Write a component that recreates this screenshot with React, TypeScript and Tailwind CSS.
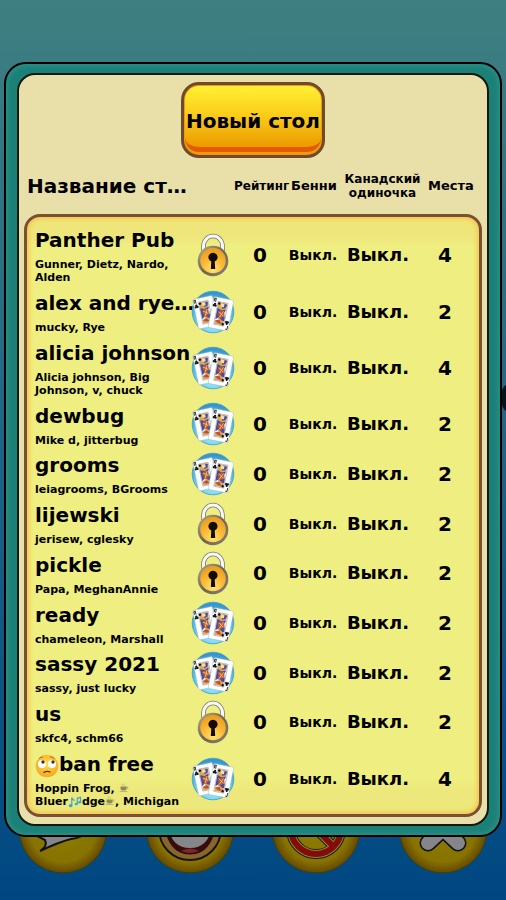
import type { ReactNode } from "react";

type Table = {
  name: ReactNode;
  players: ReactNode;
  locked?: boolean;
  seats: number;
};

function RollingEyes() {
  return (
    <svg viewBox="0 0 24 24" className="inline-block size-6 align-bottom" aria-label="🙄" role="img">
      <defs>
        <radialGradient id="face" cx="50%" cy="40%" r="60%">
          <stop offset="0" stopColor="#ffe04a" />
          <stop offset="1" stopColor="#f5a623" />
        </radialGradient>
      </defs>
      <circle cx="12" cy="12" r="11.300" fill="url(#face)" />
      <circle cx="7" cy="10" r="4" fill="#fff" />
      <circle cx="17" cy="10" r="4" fill="#fff" />
      <circle cx="8" cy="8" r="1.700" fill="#4a3320" />
      <circle cx="18" cy="8" r="1.700" fill="#4a3320" />
      <path d="M4 4.600q2-2 4-1.600M15 3q3-.2 4.500 1.600" stroke="#b06a1c" strokeWidth="1" fill="none" />
      <path d="M9 18.300q3-1.600 6-.5" stroke="#5b3a12" strokeWidth="1.400" fill="none" strokeLinecap="round" />
    </svg>
  );
}

function Coffee() {
  return (
    <svg viewBox="0 0 10 10" className="inline-block size-2.5 align-baseline" aria-label="☕" role="img">
      <path d="M1.500 4.500h6v2q0 2-3 2t-3-2z" fill="#8f8a5c" />
      <path d="M7.500 5h1.500q0 2-1.800 2M.8 9.500h7.600M3.500 3.500q-.8-.8 0-1.800M5.500 3.500q-.8-.8 0-1.800" stroke="#a8a268" strokeWidth=".7" fill="none" />
    </svg>
  );
}

function Notes() {
  return (
    <svg viewBox="0 0 14 13" className="inline-block h-3 w-3.5 align-bottom" aria-label="🎶" role="img">
      <path d="M3.500 10V1.500q.3 2 3 3.500M9.500 8.500v-6l3.500-1v5" stroke="#39a9c9" strokeWidth="1.300" fill="none" />
      <ellipse cx="2.300" cy="10.500" rx="2" ry="1.700" fill="#39a9c9" />
      <ellipse cx="8.400" cy="8.600" rx="1.700" ry="1.400" fill="#39a9c9" />
      <ellipse cx="12" cy="6.700" rx="1.600" ry="1.300" fill="#39a9c9" />
    </svg>
  );
}

const tables: Table[] = [
  { name: "Panther Pub", players: "Gunner, Dietz, Nardo, Alden", locked: true, seats: 4 },
  { name: "alex and rye…", players: "mucky, Rye", seats: 2 },
  { name: "alicia johnson", players: "Alicia johnson, Big Johnson, v, chuck", seats: 4 },
  { name: "dewbug", players: "Mike d, jitterbug", seats: 2 },
  { name: "grooms", players: "leiagrooms, BGrooms", seats: 2 },
  { name: "lijewski", players: "jerisew, cglesky", locked: true, seats: 2 },
  { name: "pickle", players: "Papa, MeghanAnnie", locked: true, seats: 2 },
  { name: "ready", players: "chameleon, Marshall", seats: 2 },
  { name: "sassy 2021", players: "sassy, just lucky", seats: 2 },
  { name: "us", players: "skfc4, schm66", locked: true, seats: 2 },
  {
    name: <><RollingEyes />ban free</>,
    players: <>Hoppin Frog, <Coffee /><br />Bluer<Notes />dge<Coffee />, Michigan</>,
    seats: 4,
  },
];

function Lock() {
  return (
    <svg viewBox="0 0 44 44" className="block size-11" aria-label="Закрытый стол" role="img">
      <defs>
        <radialGradient id="brass" cx="50%" cy="85%" r="85%">
          <stop offset="0" stopColor="#ffe56e" />
          <stop offset=".45" stopColor="#fbbb38" />
          <stop offset="1" stopColor="#e99a1c" />
        </radialGradient>
        <linearGradient id="rim" x1="0" y1="0" x2="1" y2="1">
          <stop offset="0" stopColor="#b5ae96" />
          <stop offset=".5" stopColor="#6b6455" />
          <stop offset="1" stopColor="#8b8472" />
        </linearGradient>
      </defs>
      <path d="M12.500 18v-5a9.500 10 0 0 1 19 0v5" fill="none" stroke="#77766c" strokeWidth="4.500" />
      <path d="M12.500 18v-5a9.500 10 0 0 1 19 0v5" fill="none" stroke="#f8f8f8" strokeWidth="3" />
      <circle cx="22" cy="28" r="15.300" fill="url(#rim)" />
      <circle cx="22" cy="27.500" r="12.800" fill="url(#brass)" />
      <path d="M20.300 28.500a4.600 4.600 0 1 1 3.400 0l.5 7.500h-4.400z" fill="#130c02" />
    </svg>
  );
}

function PlayingCard() {
  return (
    <g>
      <rect x="0" y="0" width="18" height="27" rx="1.500" fill="#fff" stroke="#9fb2be" strokeWidth=".4" />
      <rect x="4.500" y="3.500" width="9" height="20" fill="#fbf6ee" stroke="#7777a8" strokeWidth=".4" />
      <path d="M5 4h8v4l-2 3 2 3-4 5-4-3z" fill="#d8a850" />
      <path d="M5 9l4 1.500 4-1.500L11 14l-6 5z" fill="#4b4ca0" />
      <path d="M9 4l4 1-1 3-3 1zM9 17l4-2v4l-3 2z" fill="#4b4ca0" />
      <path d="M5 23v-3l4-2 4 2v3z" fill="#d8a850" />
      <path d="M6 12.500l4-2.500 2 5-4 3zM5 20l4-1 2 3H8z" fill="#c0503c" />
      <path d="M7 12l4 3M11 11l-3 6" stroke="#e9cb58" strokeWidth=".8" />
      <path d="M7.500 4.500h3v3h-3z" fill="#f5d9b5" />
      <path d="M1 4V1.200h1.600M2.300 1.200v3" stroke="#111" strokeWidth=".7" fill="none" />
      <path d="M17 22.800v3h-1.600" stroke="#111" strokeWidth=".7" fill="none" />
      <g fill="#111">
        <circle cx="2.200" cy="6" r="1" /><circle cx="1.400" cy="7.400" r="1" /><circle cx="3" cy="7.400" r="1" />
        <circle cx="15.800" cy="21" r="1" /><circle cx="15" cy="19.600" r="1" /><circle cx="16.600" cy="19.600" r="1" />
        <circle cx="5.800" cy="5" r="1.100" /><circle cx="12.300" cy="22" r="1.100" />
      </g>
    </g>
  );
}

function Cards() {
  return (
    <svg viewBox="0 0 44 44" className="block size-11" aria-label="Открытый стол" role="img">
      <defs>
        <radialGradient id="sky" cx="50%" cy="75%" r="70%">
          <stop offset="0" stopColor="#a8f0ff" />
          <stop offset=".65" stopColor="#5cc4ec" />
          <stop offset="1" stopColor="#3596cf" />
        </radialGradient>
      </defs>
      <circle cx="22" cy="22" r="20.800" fill="url(#sky)" stroke="#3f9dcc" strokeWidth=".8" />
      <g transform="translate(1.500 9.500) rotate(-12) scale(1.120 1.120)"><PlayingCard /></g>
      <g transform="translate(23 6.500) rotate(11) scale(1.120 1.160)"><PlayingCard /></g>
    </svg>
  );
}

function RoundButton({ label, children }: { label: string; children: ReactNode }) {
  return (
    <button type="button" aria-label={label} className="size-[90px] shrink-0">
      <svg viewBox="0 0 90 90" className="block size-full">
        <defs>
          <radialGradient id="coin">
            <stop offset="0" stopColor="#8c7c00" />
            <stop offset=".75" stopColor="#877300" />
            <stop offset=".93" stopColor="#705400" />
            <stop offset="1" stopColor="#5f4b00" />
          </radialGradient>
        </defs>
        <circle cx="45" cy="45" r="44" fill="url(#coin)" stroke="#33401c" />
        {children}
      </svg>
    </button>
  );
}

const columns = "grid grid-cols-[minmax(0,1fr)_44px_50px_56px_74px_60px] items-center";
const headings = "grid grid-cols-[minmax(0,1fr)_50px_60px_77px_60px] items-center";

export default function App() {
  return (
    <div className="relative isolate flex min-h-screen flex-col overflow-hidden bg-linear-to-b from-[#3e8080] via-[#1f6486] to-[#004782] px-1 pt-[62px] pb-[63px] font-['DejaVu_Sans',sans-serif] font-bold text-black">
      <div className="absolute top-[384px] -right-3 -z-10 h-7 w-4 rounded-full bg-[#06131c]" />
      <nav className="absolute inset-x-0 bottom-[26px] -z-10 flex justify-between px-[18px]">
        <RoundButton label="Чат">
          <path d="M15 34q0-22 32-22t30 22q-2 18-24 21-12 3-31 12 8-5 5-11l-6-3q8-3-6-19z" fill="#85858a" stroke="#111" strokeWidth="2" />
        </RoundButton>
        <RoundButton label="Эмоции">
          <circle cx="45" cy="45" r="31" fill="#8a642c" stroke="#17140c" strokeWidth="2" />
          <path d="M20 42h50q-4 28-25 28T20 42z" fill="#3b0b0b" stroke="#111" />
          <path d="M23 43h44q-4 21-22 21T23 43z" fill="#85858a" />
          <path d="M36 67q9-5 18 0-9 4-18 0z" fill="#7e2525" />
        </RoundButton>
        <RoundButton label="Заблокировать">
          <circle cx="45" cy="45" r="25" fill="none" stroke="#1c1b0a" strokeWidth="10" />
          <path d="M27 27l36 36" stroke="#1c1b0a" strokeWidth="10" />
          <circle cx="45" cy="45" r="25" fill="none" stroke="#908348" strokeWidth="8" />
          <path d="M27 27l36 36" stroke="#908348" strokeWidth="8" />
          <circle cx="45" cy="45" r="25" fill="none" stroke="#850b08" strokeWidth="6" />
          <path d="M27 27l36 36" stroke="#850b08" strokeWidth="6" />
        </RoundButton>
        <RoundButton label="Закрыть">
          <path d="M30 31l30 28M60 31L30 59" stroke="#111" strokeWidth="17" strokeLinecap="round" />
          <path d="M30 31l30 28M60 31L30 59" stroke="#85858a" strokeWidth="14" strokeLinecap="round" />
        </RoundButton>
      </nav>

      <main className="flex grow flex-col rounded-[22px] border-2 border-black bg-[#1b8078] px-[11px] py-[9px] shadow-[inset_0_0_5px_2px_#2c9184]">
        <div className="flex grow flex-col rounded-[18px] border-2 border-[#14190f] bg-[#e9dfa9] px-[5px] py-[7px]">
          <button
            type="button"
            className="mx-auto flex h-[76px] w-[144px] items-stretch rounded-[18px] border-3 border-[#704a2c] bg-[#f0990c] p-px pb-[3px] text-xl"
          >
            <span className="flex grow items-center justify-center rounded-[14px] border-b-[5px] border-[#e45a00] bg-linear-to-b from-[#fff033] via-[#f9cb17] to-[#eb9a00] pt-2 whitespace-nowrap">
              Новый стол
            </span>
          </button>

          <table className="flex grow flex-col">
            <thead className="block pr-px pl-[3px]">
              <tr className={headings + " h-14 text-center"}>
                <th className="truncate text-left text-xl">Название ст…</th>
                <th className="text-xs">Рейтинг</th>
                <th className="text-[13px]">Бенни</th>
                <th className="text-xs leading-[14px]">Канадский одиночка</th>
                <th className="text-[13px]">Места</th>
              </tr>
            </thead>
            <tbody className="flex grow flex-col rounded-[16px] border-3 border-[#7a5033] bg-[linear-gradient(#eee67a,#eee67a_20px,#efee80_28px,#efee80_94%,#ede87b_96%)] pt-[7px] pr-1 pb-1 pl-2 shadow-[inset_0_0_4px_2px_#f5c452]">
              {tables.map((table, index) => (
                <tr key={index} className={columns + " grow text-center text-xl"}>
                  <th scope="row" className="py-0.5 text-left">
                    <div className="leading-7 whitespace-nowrap">{table.name}</div>
                    <div className="pt-1 text-[11px] leading-[13px]">{table.players}</div>
                  </th>
                  <td>{table.locked ? <Lock /> : <Cards />}</td>
                  <td>0</td>
                  <td className="text-sm">Выкл.</td>
                  <td className="text-lg">Выкл.</td>
                  <td>{table.seats}</td>
                </tr>
              ))}
            </tbody>
          </table>
        </div>
      </main>
    </div>
  );
}
